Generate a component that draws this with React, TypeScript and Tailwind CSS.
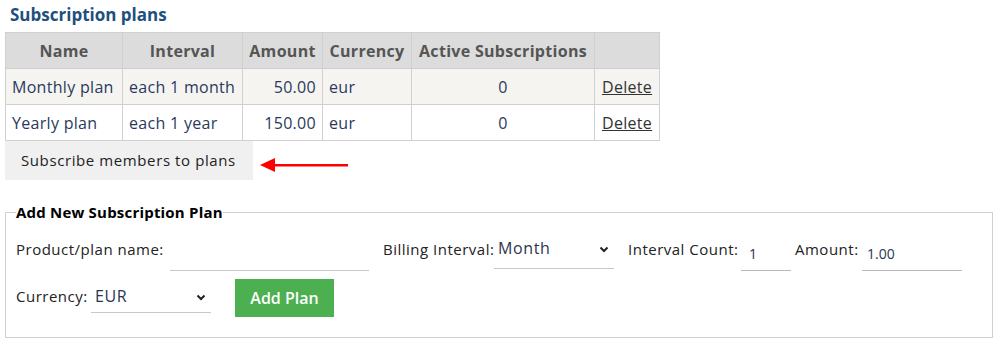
import React from 'react'

const plans = [
  { name: 'Monthly plan', interval: 'each 1 month', amount: '50.00', currency: 'eur', active: 0 },
  { name: 'Yearly plan', interval: 'each 1 year', amount: '150.00', currency: 'eur', active: 0 },
]

const Chevron = () => (
  <svg width="10" height="7" viewBox="0 0 10 7" className="absolute right-[5px] mt-[8px]">
    <path d="M1.5 1.5 L5 5 L8.5 1.5" fill="none" stroke="#222" strokeWidth="2" />
  </svg>
)

const SelectBox = ({ value, pad }: { value: string; pad: string }) => (
  <div className={`relative h-[34px] w-[120px] border-b border-[#c8c8c8] flex items-start ${pad} pl-[4px] text-[16px] leading-[21px] tracking-[0.6px] text-[#2a3550] font-['Open_Sans',sans-serif]`}>
    {value}
    <Chevron />
  </div>
)

export default function App() {
  return (
    <div className="bg-white min-h-[352px] pl-[5px] pt-[3px] font-['Open_Sans',sans-serif] text-[15px]">
      <h2 className="pl-[5px] text-[17px] leading-[24px] font-bold text-[#1f4f7d]">Subscription plans</h2>

      <table className="mt-[5px] border-collapse table-fixed w-[654px] border border-[#d0d0d0] tracking-[0.3px]">
        <thead>
          <tr className="bg-[#dcdcdc] h-[36px] text-[#555] text-[16px]">
            <th className="w-[117px] border border-[#d0d0d0] font-bold">Name</th>
            <th className="w-[120px] border border-[#d0d0d0] font-bold">Interval</th>
            <th className="w-[80px] border border-[#d0d0d0] font-bold">Amount</th>
            <th className="w-[89px] border border-[#d0d0d0] font-bold">Currency</th>
            <th className="w-[183px] border border-[#d0d0d0] font-bold">Active Subscriptions</th>
            <th className="w-[65px] border border-[#d0d0d0]"></th>
          </tr>
        </thead>
        <tbody className="text-[#2a3a5c] text-[16px]">
          {plans.map((p, i) => (
            <tr key={p.name} className={`h-[36px] ${i === 0 ? 'bg-[#f5f4f1]' : 'bg-white'}`}>
              <td className="border border-[#d0d0d0] px-[6px] whitespace-nowrap">{p.name}</td>
              <td className="border border-[#d0d0d0] px-[6px] whitespace-nowrap">{p.interval}</td>
              <td className="border border-[#d0d0d0] px-[6px] text-right">{p.amount}</td>
              <td className="border border-[#d0d0d0] px-[6px]">{p.currency}</td>
              <td className="border border-[#d0d0d0] px-[6px] text-center">{p.active}</td>
              <td className="border border-[#d0d0d0] px-[7px]">
                <a href="#" className="underline text-[#333]">Delete</a>
              </td>
            </tr>
          ))}
        </tbody>
      </table>

      <div className="flex items-center">
        <button className="h-[39px] w-[248px] bg-[#f0f0f0] text-[15px] tracking-[0.6px] text-[#222] text-left pl-[16px] whitespace-nowrap">
          Subscribe members to plans
        </button>
        <svg width="92" height="16" viewBox="0 0 92 16" className="ml-[7px] mt-[8px]">
          <polygon points="0,8 15,1 15,15" fill="#f00" />
          <rect x="12" y="7" width="76" height="2.5" fill="#f00" />
        </svg>
      </div>

      <fieldset className="mt-[21px] w-[988px] border border-[#d0d0d0] px-[10px] pb-[20px]">
        <legend className="text-[15px] tracking-[0.2px] font-bold text-black">Add New Subscription Plan</legend>
        <div className="flex items-start text-[15px] tracking-[0.5px] text-[#222] mt-[11px]">
          <span className="mt-[3px] mr-[4px] w-[150px] shrink-0 whitespace-nowrap">Product/plan name:</span>
          <div className="h-[36px] w-[199px] border-b border-[#c8c8c8] mr-[14px]"></div>
          <span className="mt-[3px] mr-[4px] w-[107px] shrink-0 whitespace-nowrap">Billing Interval:</span>
          <div className="mr-[14px]"><SelectBox value="Month" pad="pt-[3px]" /></div>
          <span className="mt-[3px] mr-[4px] w-[109px] shrink-0 whitespace-nowrap">Interval Count:</span>
          <div className="h-[36px] w-[50px] border-b border-[#b8b8b8] mr-[4px] pl-[8px] pt-[8px] text-[14px] tracking-normal text-[#2a3550]">1</div>
          <span className="mt-[3px] mr-[4px] w-[63px] shrink-0 whitespace-nowrap">Amount:</span>
          <div className="h-[36px] w-[100px] border-b border-[#b8b8b8] pl-[5px] pt-[8px] text-[14px] tracking-normal text-[#2a3550]">1.00</div>
        </div>
        <div className="flex items-start text-[15px] tracking-[0.5px] text-[#222] mt-[8px]">
          <span className="mt-[6px] mr-[4px] w-[71px] shrink-0 whitespace-nowrap">Currency:</span>
          <div className="mr-[24px]"><SelectBox value="EUR" pad="pt-[7px]" /></div>
          <button className="h-[38px] w-[99px] bg-[#4caf50] text-white text-[16px] tracking-normal font-semibold">Add Plan</button>
        </div>
      </fieldset>
    </div>
  )
}
